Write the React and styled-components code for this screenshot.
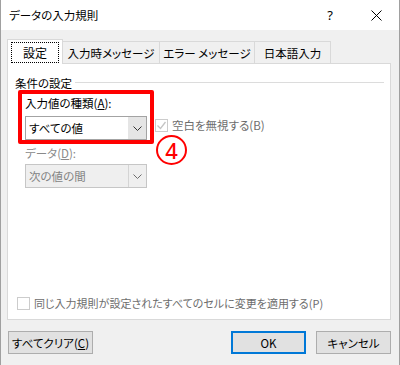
import styled, { createGlobalStyle } from "styled-components";

const GlobalStyle = createGlobalStyle`
  html, body {
    margin: 0;
    padding: 0;
    background: #f0f0f0;
  }
  * {
    box-sizing: border-box;
  }
`;

const Chevron = ({ color }) => (
  <svg width="9" height="5" viewBox="0 0 9 5">
    <polyline points="0.5,0.5 4.5,4.5 8.5,0.5" fill="none" stroke={color} strokeWidth="1" />
  </svg>
);

const CloseIcon = () => (
  <svg width="11" height="11" viewBox="0 0 11 11">
    <line x1="0.5" y1="0.5" x2="10.5" y2="10.5" stroke="#000" strokeWidth="1" />
    <line x1="10.5" y1="0.5" x2="0.5" y2="10.5" stroke="#000" strokeWidth="1" />
  </svg>
);

const CheckMark = () => (
  <svg width="11" height="11" viewBox="0 0 11 11">
    <polyline points="1.5,5.5 4.5,8.5 9.5,2" fill="none" stroke="#c4c4c4" strokeWidth="1.3" />
  </svg>
);

const App = () => {
  return (
    <>
      <GlobalStyle />
      <Window>
        <TitleBar>
          <Title>データの入力規則</Title>
          <CaptionButton>?</CaptionButton>
          <CaptionButton>
            <CloseIcon />
          </CaptionButton>
        </TitleBar>
        <Body>
          <TabRow>
            <ActiveTab>
              <FocusRing>設定</FocusRing>
            </ActiveTab>
            <Tab width={97}>入力時メッセージ</Tab>
            <Tab width={95}>エラー メッセージ</Tab>
            <Tab width={76}>日本語入力</Tab>
          </TabRow>
          <Panel>
            <GroupHeader>
              <GroupLabel>条件の設定</GroupLabel>
              <GroupLine />
            </GroupHeader>
            <GroupBody>
              <FieldLabel>
                入力値の種類(<u>A</u>):
              </FieldLabel>
              <ComboRow>
                <Combo>
                  <ComboText>すべての値</ComboText>
                  <ComboButton>
                    <Chevron color="#333" />
                  </ComboButton>
                </Combo>
                <CheckRow indent={8} top={1}>
                  <CheckBox>
                    <CheckMark />
                  </CheckBox>
                  <CheckLabel size={11.5}>空白を無視する(B)</CheckLabel>
                </CheckRow>
              </ComboRow>
              <FieldLabel disabled top={5}>
                データ(<u>D</u>):
              </FieldLabel>
              <Combo disabled top={3}>
                <ComboText disabled>次の値の間</ComboText>
                <ComboButton disabled>
                  <Chevron color="#6d6d6d" />
                </ComboButton>
              </Combo>
            </GroupBody>
            <BottomCheck indent={2}>
              <CheckBox />
              <CheckLabel>同じ入力規則が設定されたすべてのセルに変更を適用する(P)</CheckLabel>
            </BottomCheck>
          </Panel>
          <ButtonRow>
            <Button width={85}>
              すべてクリア(<u>C</u>)
            </Button>
            <Spacer />
            <Button width={75} primary>
              OK
            </Button>
            <Button width={75}>キャンセル</Button>
          </ButtonRow>
        </Body>
        <Highlight />
        <StepBadge>4</StepBadge>
      </Window>
    </>
  );
};

const Window = styled.div`
  position: relative;
  width: 400px;
  height: 365px;
  display: flex;
  flex-direction: column;
  background: #f0f0f0;
  border-left: 1px solid #a0a0a0;
  border-right: 1px solid #a0a0a0;
  font-family: "Noto Sans CJK JP", "Noto Sans", sans-serif;
  font-feature-settings: "palt";
  font-size: 11px;
  color: #000;
`;

const TitleBar = styled.div`
  height: 30px;
  display: flex;
  align-items: center;
  background: #fff;
  padding-left: 8px;
`;

const Title = styled.div`
  flex: 1;
  font-size: 11.5px;
  line-height: 30px;
`;

const CaptionButton = styled.div`
  width: 46px;
  height: 30px;
  display: flex;
  align-items: center;
  justify-content: center;
  font-family: "Noto Sans", sans-serif;
  font-size: 13px;
`;

const Body = styled.div`
  flex: 1;
  display: flex;
  flex-direction: column;
  padding: 9px 8px 0 6px;
`;

const TabRow = styled.div`
  display: flex;
  align-items: flex-end;
  height: 24px;
`;

const ActiveTab = styled.div`
  position: relative;
  z-index: 1;
  width: 56px;
  height: 25px;
  margin-bottom: -1px;
  padding: 2px 3px 1px 3px;
  background: #fff;
  border: 1px solid #d9d9d9;
  border-bottom: none;
`;

const FocusRing = styled.div`
  height: 21px;
  display: flex;
  align-items: center;
  justify-content: center;
  border: 1px dotted #000;
  font-size: 12px;
`;

const Tab = styled.div`
  width: ${(p) => p.width}px;
  height: 22px;
  display: flex;
  align-items: center;
  justify-content: center;
  background: #f0f0f0;
  border: 1px solid #d9d9d9;
  border-left: none;
  border-bottom: none;
  font-size: 11.5px;
  white-space: nowrap;
`;

const Panel = styled.div`
  height: 257px;
  display: flex;
  flex-direction: column;
  padding: 11px 6px 8px 7px;
  background: #fff;
  border: 1px solid #d9d9d9;
`;

const GroupHeader = styled.div`
  display: flex;
  align-items: center;
  height: 16px;
`;

const GroupLabel = styled.span`
  line-height: 16px;
  font-size: 11.5px;
`;

const GroupLine = styled.div`
  flex: 1;
  height: 1px;
  margin-left: 3px;
  margin-top: -1px;
  background: #dcdcdc;
`;

const GroupBody = styled.div`
  display: flex;
  flex-direction: column;
  align-items: flex-start;
  margin-left: 10px;
`;

const FieldLabel = styled.div`
  height: 16px;
  line-height: 16px;
  margin-top: ${(p) => (p.top !== undefined ? p.top : 4)}px;
  margin-bottom: 5px;
  font-size: 11.5px;
  color: ${(p) => (p.disabled ? "#8a8a8a" : "#000")};
  white-space: nowrap;
`;

const ComboRow = styled.div`
  display: flex;
  align-items: flex-start;
`;

const Combo = styled.div`
  width: 122px;
  height: 24px;
  margin-top: ${(p) => (p.top ? p.top - 5 : 0)}px;
  display: flex;
  border: 1px solid ${(p) => (p.disabled ? "#c6c6c6" : "#a3a3a3")};
  background: ${(p) => (p.disabled ? "#efefef" : "#fff")};
`;

const ComboText = styled.div`
  flex: 1;
  padding-left: 3px;
  line-height: 22px;
  font-size: 11.5px;
  color: ${(p) => (p.disabled ? "#838383" : "#000")};
`;

const ComboButton = styled.div`
  width: 18px;
  display: flex;
  align-items: center;
  justify-content: center;
  background: ${(p) => (p.disabled ? "#efefef" : "#e5e5e5")};
  border-left: 1px solid ${(p) => (p.disabled ? "#d4d4d4" : "#e5e5e5")};
`;

const CheckRow = styled.div`
  display: flex;
  align-items: center;
  height: 16px;
  margin-left: ${(p) => p.indent || 0}px;
  margin-top: ${(p) => p.top || 0}px;
`;

const BottomCheck = styled(CheckRow)`
  margin-top: auto;
`;

const CheckBox = styled.div`
  width: 13px;
  height: 13px;
  display: flex;
  align-items: center;
  justify-content: center;
  border: 1px solid #cccccc;
  background: #fff;
`;

const CheckLabel = styled.span`
  margin-left: 4px;
  line-height: 16px;
  font-size: ${(p) => p.size || 11}px;
  color: #6d6d6d;
  white-space: nowrap;
`;

const ButtonRow = styled.div`
  display: flex;
  gap: 10px;
  margin-top: 11px;
  margin-left: 1px;
`;

const Spacer = styled.div`
  flex: 1;
`;

const Button = styled.div`
  width: ${(p) => p.width}px;
  height: 23px;
  display: flex;
  align-items: center;
  justify-content: center;
  background: #e1e1e1;
  border: ${(p) => (p.primary ? "2px solid #0078d7" : "1px solid #adadad")};
  font-size: 11.5px;
  white-space: nowrap;
`;

const Highlight = styled.div`
  position: absolute;
  left: 17px;
  top: 90px;
  width: 136px;
  height: 54px;
  border: 4px solid #ff0000;
  border-radius: 2px;
  pointer-events: none;
`;

const StepBadge = styled.div`
  position: absolute;
  left: 155px;
  top: 135px;
  width: 31px;
  height: 30px;
  display: flex;
  align-items: center;
  justify-content: center;
  border: 2px solid #ff0000;
  border-radius: 50%;
  font-family: "Noto Sans", sans-serif;
  font-size: 22px;
  font-weight: 500;
  line-height: 1;
  color: #ff0000;
`;

export default App;
